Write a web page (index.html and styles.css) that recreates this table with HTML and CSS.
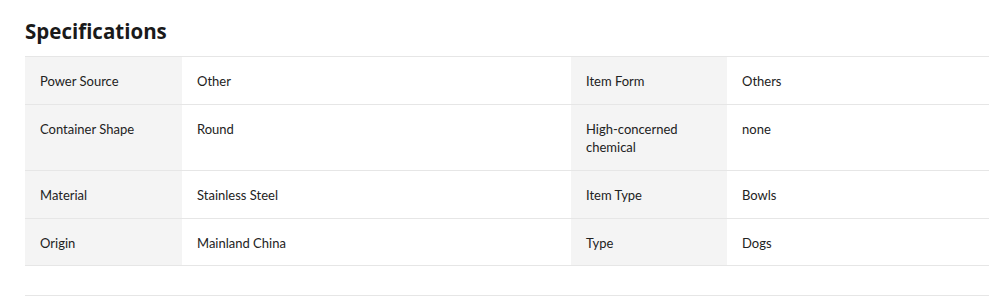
FILE: index.html
```html
<!DOCTYPE html>
<html>
<head>
<meta charset="utf-8">
<link rel="stylesheet" href="styles.css">
</head>
<body>
<section class="specs">
  <h2 class="specs-title">Specifications</h2>
  <div class="specs-table">
    <div class="spec-row">
      <div class="spec-label">Power Source</div>
      <div class="spec-value">Other</div>
      <div class="spec-label">Item Form</div>
      <div class="spec-value">Others</div>
    </div>
    <div class="spec-row">
      <div class="spec-label">Container Shape</div>
      <div class="spec-value">Round</div>
      <div class="spec-label">High-concerned<br>chemical</div>
      <div class="spec-value">none</div>
    </div>
    <div class="spec-row">
      <div class="spec-label">Material</div>
      <div class="spec-value">Stainless Steel</div>
      <div class="spec-label">Item Type</div>
      <div class="spec-value">Bowls</div>
    </div>
    <div class="spec-row">
      <div class="spec-label">Origin</div>
      <div class="spec-value">Mainland China</div>
      <div class="spec-label">Type</div>
      <div class="spec-value">Dogs</div>
    </div>
  </div>
  <div class="specs-divider"></div>
</section>
</body>
</html>
```

FILE: styles.css
```css
html, body {
  margin: 0;
  padding: 0;
  background: #ffffff;
}
body {
  font-family: "Lato", "Open Sans", sans-serif;
  color: #222222;
}
.specs {
  padding: 15px 0 0 25px;
}
.specs-title {
  margin: 0;
  height: 41px;
  font-family: "Open Sans", sans-serif;
  font-weight: 700;
  font-size: 20.5px;
  line-height: 32px;
  color: #1a1a1a;
}
.specs-table {
  border-top: 1px solid #e6e6e6;
}
.spec-row {
  display: grid;
  grid-template-columns: 157px 389px 156px 1fr;
  border-bottom: 1px solid #e6e6e6;
}
.spec-row:last-child .spec-label,
.spec-row:last-child .spec-value {
  padding-bottom: 13px;
}
.spec-label,
.spec-value {
  padding: 15px 15px 14px;
  font-size: 13px;
  line-height: 18px;
}
.spec-label {
  background: #f4f4f4;
}
.specs-divider {
  margin-top: 29px;
  border-top: 1px solid #e6e6e6;
}
```
